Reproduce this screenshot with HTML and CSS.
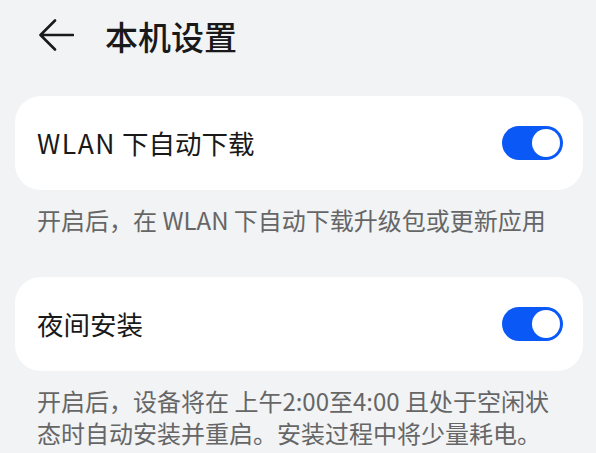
FILE: index.html
```html
<!DOCTYPE html>
<html lang="zh-CN">
<head>
  <meta charset="UTF-8">
  <meta name="viewport" content="width=device-width, initial-scale=1.0">
  <title>本机设置</title>
  <link rel="stylesheet" href="styles.css">
</head>
<body>
  <header class="topbar">
    <a class="back" href="#">
      <svg width="36" height="34" viewBox="0 0 36 34">
        <path d="M35 16H3M17 1.5L2.5 16L17 30.5" fill="none" stroke="#1a1a1a" stroke-width="2.6" stroke-linecap="round" stroke-linejoin="round"/>
      </svg>
    </a>
    <h1>本机设置</h1>
  </header>

  <section class="settings">
    <div class="card">
      <span class="label"><span class="latin">WLAN</span> 下自动下载</span>
      <label class="switch">
        <input type="checkbox" checked>
        <span class="slider"></span>
      </label>
    </div>
    <p class="note">开启后，在 WLAN 下自动下载升级包或更新应用</p>

    <div class="card">
      <span class="label">夜间安装</span>
      <label class="switch">
        <input type="checkbox" checked>
        <span class="slider"></span>
      </label>
    </div>
    <p class="note">开启后，设备将在 上午2:00至4:00 且处于空闲状态时自动安装并重启。安装过程中将少量耗电。</p>
  </section>
</body>
</html>
```

FILE: styles.css
```css
body {
  font-family: "Noto Sans CJK SC", "Noto Sans", sans-serif;
  background-color: #f1f3f5;
  color: #191919;
  margin: 0;
  padding: 0;
}

.topbar {
  display: flex;
  align-items: center;
  height: 72px;
  padding-left: 38px;
}

.back {
  display: flex;
  align-items: center;
}

.topbar h1 {
  margin: 0 0 0 31px;
  font-size: 33px;
  font-weight: 500;
  line-height: 40px;
}

.settings {
  margin-top: 24px;
  padding: 0 13px 0 15px;
}

.card {
  display: flex;
  justify-content: space-between;
  align-items: center;
  height: 94px;
  padding: 0 20px 0 22px;
  background-color: #ffffff;
  border-radius: 26px;
}

.label {
  font-size: 26.5px;
  font-weight: 400;
  line-height: 34px;
}

.label .latin {
  letter-spacing: 1.5px;
}

.switch {
  position: relative;
  width: 61px;
  height: 34px;
  cursor: pointer;
}

.switch input {
  display: none;
}

.slider {
  position: absolute;
  inset: 0;
  background-color: #0a59f7;
  border-radius: 17px;
}

/* knob sits over the track */
.slider::after {
  content: "";
  position: absolute;
  top: 3px;
  right: 3px;
  width: 28px;
  height: 28px;
  background-color: #ffffff;
  border-radius: 50%;
}

.note {
  margin: 14px 0 41px 22px;
  font-size: 24px;
  line-height: 32px;
  color: #666666;
  padding-right: 30px;
}

.note:last-child {
  margin-bottom: 0;
}
```
